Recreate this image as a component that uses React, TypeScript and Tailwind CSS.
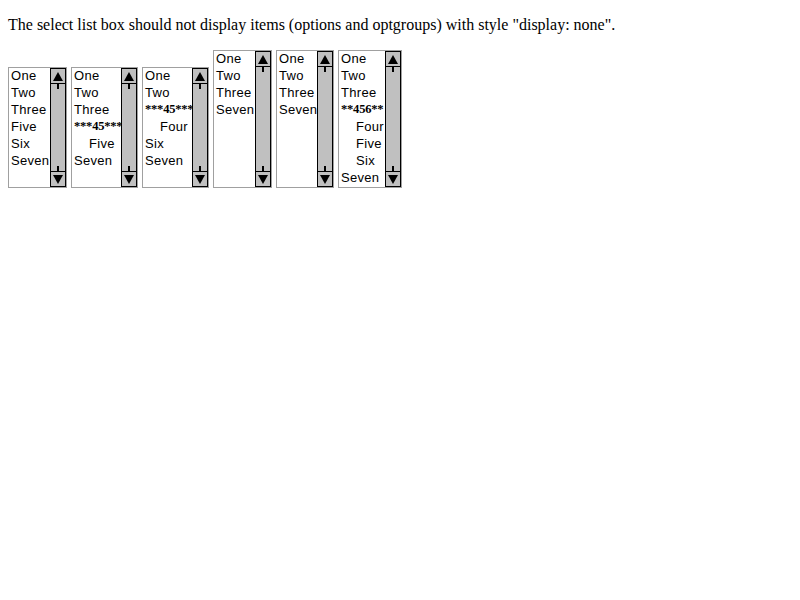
import React from "react";

type Row = { text: string; kind?: "opt" | "group" | "child" };

const boxes: { w: string; tall: boolean; rows: Row[] }[] = [
  {
    w: "w-[59px]",
    tall: false,
    rows: [{ text: "One" }, { text: "Two" }, { text: "Three" }, { text: "Five" }, { text: "Six" }, { text: "Seven" }],
  },
  {
    w: "w-[67px]",
    tall: false,
    rows: [
      { text: "One" },
      { text: "Two" },
      { text: "Three" },
      { text: "***45***", kind: "group" },
      { text: "Five", kind: "child" },
      { text: "Seven" },
    ],
  },
  {
    w: "w-[67px]",
    tall: false,
    rows: [
      { text: "One" },
      { text: "Two" },
      { text: "***45***", kind: "group" },
      { text: "Four", kind: "child" },
      { text: "Six" },
      { text: "Seven" },
    ],
  },
  {
    w: "w-[59px]",
    tall: true,
    rows: [{ text: "One" }, { text: "Two" }, { text: "Three" }, { text: "Seven" }],
  },
  {
    w: "w-[58px]",
    tall: true,
    rows: [{ text: "One" }, { text: "Two" }, { text: "Three" }, { text: "Seven" }],
  },
  {
    w: "w-[64px]",
    tall: true,
    rows: [
      { text: "One" },
      { text: "Two" },
      { text: "Three" },
      { text: "**456**", kind: "group" },
      { text: "Four", kind: "child" },
      { text: "Five", kind: "child" },
      { text: "Six", kind: "child" },
      { text: "Seven" },
    ],
  },
];

function Scrollbar() {
  return (
    <div className="flex w-[16px] shrink-0 flex-col border border-black bg-[#c0c0c0]">
      <div className="flex h-[15px] items-center justify-center border-b border-black">
        <svg width="10" height="9" viewBox="0 0 10 9">
          <polygon points="5,0 10,9 0,9" fill="#000" />
        </svg>
      </div>
      <div className="flex flex-1 flex-col items-center justify-between">
        <div className="h-[5px] w-[2px] bg-black" />
        <div className="h-[5px] w-[2px] bg-black" />
      </div>
      <div className="flex h-[15px] items-center justify-center border-t border-black">
        <svg width="10" height="9" viewBox="0 0 10 9">
          <polygon points="0,0 10,0 5,9" fill="#000" />
        </svg>
      </div>
    </div>
  );
}

export default function App() {
  return (
    <div className="min-h-[600px] bg-white p-[8px] text-black">
      <p className="my-[8px] font-['Liberation_Serif',serif] text-[16px] leading-[18px]">
        The select list box should not display items (options and optgroups) with style "display: none".
      </p>
      <div className="mt-[16px] flex items-end gap-[4px]">
        {boxes.map((b, i) => (
          <div
            key={i}
            className={`flex ${b.w} ${b.tall ? "h-[138px]" : "h-[121px]"} border border-[#a0a0a0] bg-white`}
          >
            <div className="min-w-0 flex-1 overflow-hidden pl-[2px]">
              {b.rows.map((r, j) =>
                r.kind === "group" ? (
                  <div
                    key={j}
                    className="h-[17px] whitespace-nowrap font-['Liberation_Serif',serif] text-[12.5px] font-bold leading-[15px] tracking-[-0.2px]"
                  >
                    {r.text}
                  </div>
                ) : (
                  <div
                    key={j}
                    className={`h-[17px] whitespace-nowrap font-['Liberation_Sans',sans-serif] text-[13px] leading-[15px] tracking-[0.3px] ${
                      r.kind === "child" ? "pl-[15px]" : ""
                    }`}
                  >
                    {r.text}
                  </div>
                )
              )}
            </div>
            <Scrollbar />
          </div>
        ))}
      </div>
    </div>
  );
}
